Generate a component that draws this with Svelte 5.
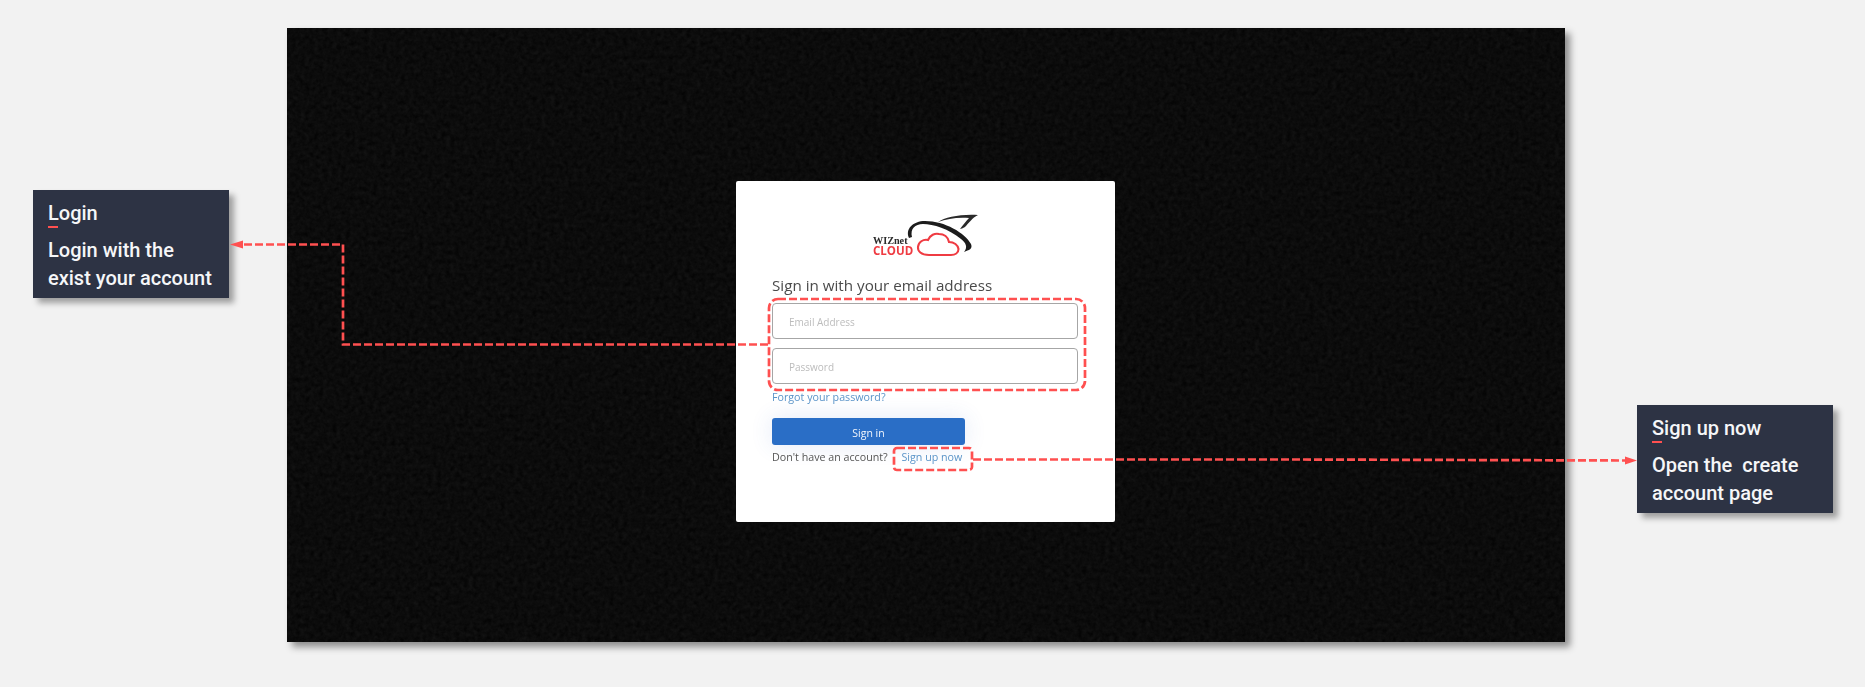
<script>
  const callouts = [
    { cls: 'left', title: 'Login', lines: ['Login with the', 'exist your account'] },
    { cls: 'right', title: 'Sign up now', lines: ['Open the\u00a0 create', 'account page'] }
  ];
</script>

<div class="page">
  <main class="stage">
    <svg class="noise" aria-hidden="true" width="100%" height="100%">
      <filter id="grain" x="0" y="0" width="100%" height="100%" color-interpolation-filters="sRGB">
        <feTurbulence type="fractalNoise" baseFrequency="0.22" numOctaves="3" seed="4" />
        <feColorMatrix values="0 0 0 0 0.07  0 0 0 0 0.07  0 0 0 0 0.07  1 1 0 0 -0.5" />
      </filter>
      <rect width="100%" height="100%" filter="url(#grain)" />
    </svg>

    <section class="card">
      <svg class="logo" width="112" height="48" viewBox="0 0 112 48" aria-label="WIZnet Cloud">
        <path d="M36 27C32 18 40 10 52 10C72 10 92 22 98 33C100 38 96 39 91 41C95 36 93 32 88 28C76 18 60 13 50 13C42 13 37 18 39 26Z" fill="#1c1c1c" />
        <path d="M65 11C72 6 88 3 105 4C99 7 96 12 92 16C90 17 88 18 87 18C90 14 93 10 96 7C84 6 74 8 65 11Z" fill="#2a2a2a" />
        <text x="0" y="33" class="wiz">WIZnet</text>
        <text x="0" y="44" class="cloud">CLOUD</text>
        <path d="M56 44C48 44 44.5 40 45 36C45.5 31 50 28 55 29C57 24 62 22 66 23C71 23 75 26 76 31C81 31 85 34 85.5 38C85.5 42 82 44 78 44Z" fill="#fff" stroke="#ef3b42" stroke-width="2.1" />
      </svg>

      <h1>Sign in with your email address</h1>
      <input class="field" type="text" placeholder="Email Address" />
      <input class="field" type="password" placeholder="Password" />
      <a class="forgot" href="#forgot">Forgot your password?</a>
      <button class="signin" type="button">Sign in</button>
      <p class="signup">Don't have an account? <a href="#signup">Sign up now</a></p>
    </section>
  </main>

  {#each callouts as c}
    <aside class="callout {c.cls}">
      <h2>{c.title}</h2>
      {#each c.lines as line}
        <p>{line}</p>
      {/each}
    </aside>
  {/each}

  <svg class="marks" width="1865" height="687" aria-hidden="true">
    <g fill="none" stroke="#ff5050" stroke-width="2.7" stroke-dasharray="8 3">
      <rect x="769" y="299" width="316" height="91" rx="9" />
      <rect x="894" y="448" width="78" height="22" rx="3" />
      <path d="M768 344.5H343V244.5H243" />
      <path d="M973 459.5H1300L1625 460.5" />
    </g>
    <path d="M230 244.5L243 240.5V248.5Z" fill="#ff5050" />
    <path d="M1637 460.5L1625 456.5V464.5Z" fill="#ff5050" />
  </svg>
</div>

<style>
  :global(body) {
    margin: 0;
    background: #f2f2f2;
  }

  .page {
    position: relative;
    width: 1865px;
    height: 687px;
    padding: 28px 0 0 287px;
    box-sizing: border-box;
    overflow: hidden;
    background: #f2f2f2;
  }

  .stage {
    position: relative;
    width: 1278px;
    height: 614px;
    box-sizing: border-box;
    padding: 153px 0 0 449px;
    display: flex;
    align-items: flex-start;
    background: #050505;
    box-shadow: 5px 5px 7px rgba(0, 0, 0, 0.42);
  }

  .noise {
    position: absolute;
    inset: 0;
  }

  .card {
    position: relative;
    width: 379px;
    height: 341px;
    box-sizing: border-box;
    padding: 30px 36px 0;
    display: flex;
    flex-direction: column;
    align-items: flex-start;
    background: #fff;
    border-radius: 2px;
    font-family: "Open Sans", "Noto Sans", sans-serif;
    filter: blur(0.45px);
  }

  .logo {
    align-self: flex-start;
    margin-left: 101px;
    flex: none;
  }

  .logo .wiz {
    font: 700 10.2px "Liberation Serif", serif;
    fill: #2b2b2b;
  }

  .logo .cloud {
    font: 700 11.5px "Open Sans", sans-serif;
    fill: #ef3b42;
  }

  h1 {
    margin: 16px 0 0;
    font-size: 15.2px;
    line-height: 20px;
    font-weight: 400;
    color: #4a4a4a;
    white-space: nowrap;
  }

  .field {
    width: 306px;
    height: 36px;
    box-sizing: border-box;
    margin-top: 9px;
    padding: 2px 16px 0;
    border: 1.5px solid #a6a6a6;
    border-radius: 4px;
    background: #fff;
    font: 400 10px "Open Sans", sans-serif;
    outline: none;
  }

  h1 + .field {
    margin-top: 8px;
  }

  .field::placeholder {
    color: #bcbcbc;
    opacity: 1;
  }

  .forgot {
    margin-top: 4px;
    font-size: 10.7px;
    line-height: 18px;
    color: #5a94c8;
    text-decoration: none;
  }

  .signin {
    width: 193px;
    height: 27px;
    margin-top: 12px;
    padding: 2px 0 0;
    border: 0;
    border-radius: 3px;
    background: #2a6ec6;
    color: #f2f6fc;
    font: 400 10.5px "Open Sans", sans-serif;
    box-shadow: 0 0 22px rgba(60, 100, 200, 0.14);
  }

  .signup {
    margin: 3px 0 0;
    font-size: 10.7px;
    line-height: 18px;
    color: #555;
    white-space: nowrap;
  }

  .signup a {
    margin-left: 11px;
    color: #5a94c8;
    text-decoration: none;
  }

  .callout {
    position: absolute;
    width: 196px;
    height: 108px;
    box-sizing: border-box;
    padding: 9px 0 0 15px;
    background: #2d3344;
    box-shadow: 5px 5px 6px rgba(0, 0, 0, 0.35);
    font-family: Roboto, sans-serif;
    color: #f5f6f8;
  }

  .left {
    left: 33px;
    top: 190px;
  }

  .right {
    left: 1637px;
    top: 405px;
  }

  h2 {
    position: relative;
    margin: 0 0 9px;
    font-size: 20px;
    line-height: 28px;
    font-weight: 500;
  }

  h2::after {
    content: "";
    position: absolute;
    left: 0;
    top: 27px;
    width: 10px;
    height: 2px;
    background: #ff5050;
  }

  .callout p {
    margin: 0;
    font-size: 20px;
    line-height: 28px;
    font-weight: 500;
    white-space: nowrap;
  }

  .marks {
    position: absolute;
    left: 0;
    top: 0;
    pointer-events: none;
  }
</style>
